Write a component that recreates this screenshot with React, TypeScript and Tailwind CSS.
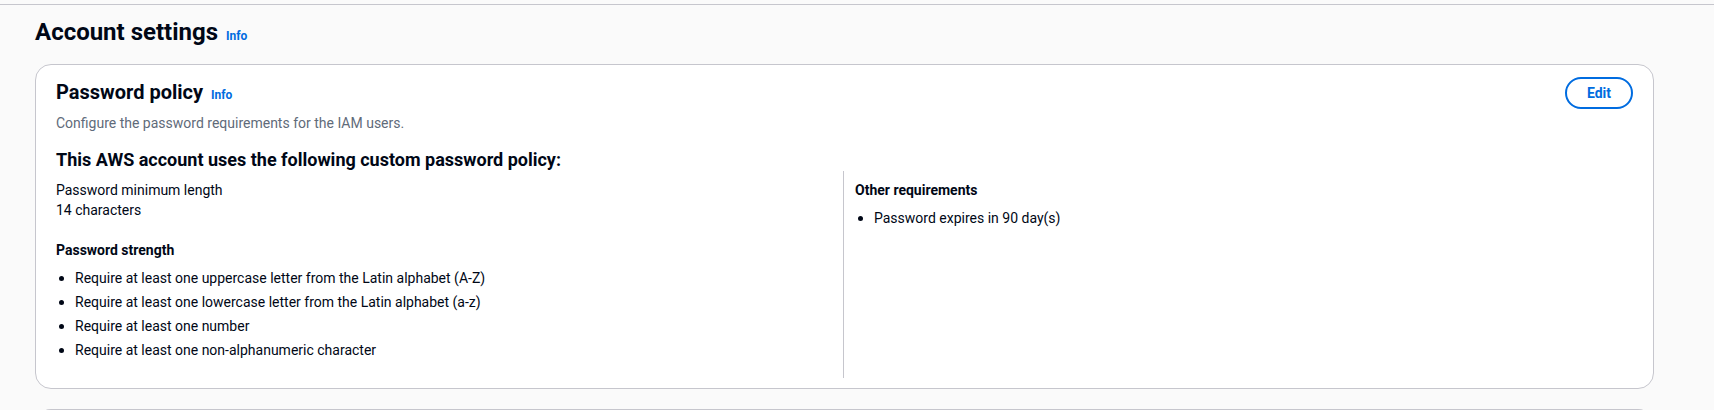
import React from 'react';

const strength = [
  'Require at least one uppercase letter from the Latin alphabet (A-Z)',
  'Require at least one lowercase letter from the Latin alphabet (a-z)',
  'Require at least one number',
  'Require at least one non-alphanumeric character',
];

function Bullet({ children }: { children: React.ReactNode }) {
  return (
    <li className="flex items-center h-5">
      <span className="ml-[3px] w-[5px] h-[5px] rounded-full bg-[#000716] shrink-0" />
      <span className="ml-[11px]">{children}</span>
    </li>
  );
}

function InfoLink() {
  return <a className="text-xs font-bold text-[#006ce0] cursor-pointer">Info</a>;
}

export default function App() {
  return (
    <div className="min-h-[410px] bg-[#fafafa] text-[#000716] text-sm leading-5 font-['Roboto',sans-serif] overflow-hidden">
      <div className="h-1" />
      <div className="border-t border-[#c6c6cd]">
        {/* Page header */}
        <div className="flex items-baseline gap-2 pl-[35px] pt-3">
          <h1 className="text-2xl leading-[30px] font-bold">Account settings</h1>
          <InfoLink />
        </div>

        {/* Password policy container */}
        <div className="mt-[17px] ml-[35px] w-[1619px] bg-white border border-[#c6c6cd] rounded-2xl px-5 pt-3 pb-[10px]">
          <div className="flex items-start justify-between">
            <div className="pt-[3px]">
              <div className="flex items-baseline gap-2">
                <h2 className="text-xl leading-6 font-bold">Password policy</h2>
                <InfoLink />
              </div>
              <p className="mt-[9px] text-[#5f6b7a]">Configure the password requirements for the IAM users.</p>
            </div>
            <button className="h-8 px-5 rounded-full border-2 border-[#006ce0] text-[#006ce0] font-bold leading-none">
              Edit
            </button>
          </div>

          <h3 className="mt-4 text-lg leading-[22px] font-bold">
            This AWS account uses the following custom password policy:
          </h3>

          <div className="grid grid-cols-[787px_1fr]">
            <div className="pt-[9px] pb-[18px] pr-3">
              <div>Password minimum length</div>
              <div>14 characters</div>
              <div className="mt-5 font-bold">Password strength</div>
              <ul className="mt-2 flex flex-col gap-1">
                {strength.map((s) => (
                  <Bullet key={s}>{s}</Bullet>
                ))}
              </ul>
            </div>
            <div className="pt-[9px] pb-[18px] pl-[11px] border-l border-[#c6c6cd]">
              <div className="font-bold">Other requirements</div>
              <ul className="mt-2 flex flex-col gap-1">
                <Bullet>Password expires in 90 day(s)</Bullet>
              </ul>
            </div>
          </div>
        </div>

        {/* Next container, cut off */}
        <div className="mt-5 ml-[35px] w-[1619px] h-4 bg-white border border-b-0 border-[#c6c6cd] rounded-t-2xl" />
      </div>
    </div>
  );
}
